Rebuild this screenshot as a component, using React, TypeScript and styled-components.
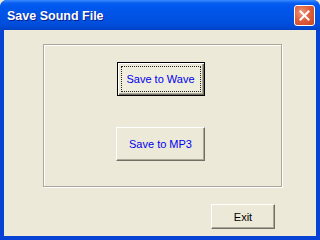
import React from 'react';
import styled, { createGlobalStyle } from 'styled-components';

const Global = createGlobalStyle`
    html, body {
        margin: 0;
        padding: 0;
        background: #ECE9D8;
    }
`;

const Frame = styled.div`
    width: 320px;
    height: 240px;
    box-sizing: border-box;
    display: flex;
    flex-direction: column;
    background: #0842D4;
    border-radius: 7px 7px 0 0;
    overflow: hidden;
    font-family: "Liberation Sans", Arial, sans-serif;
`;

const TitleBar = styled.div`
    height: 30px;
    flex: none;
    display: flex;
    align-items: center;
    padding: 0 5px 0 7px;
    background: linear-gradient(
        to bottom,
        #3A8CFF 0px,
        #0A5FF0 3px,
        #0058EE 6px,
        #0054E6 14px,
        #0050DF 22px,
        #0049D3 27px,
        #0040C4 30px
    );
`;

const Title = styled.span`
    flex: 1;
    color: #fff;
    font-size: 12.5px;
    font-weight: bold;
    text-shadow: 1px 1px 0 #0A1C8C;
    padding-top: 1px;
`;

const CloseButton = styled.div`
    width: 21px;
    height: 21px;
    box-sizing: border-box;
    border: 1px solid #fff;
    border-radius: 3px;
    background: radial-gradient(circle at 35% 35%, #EE9A7E 0%, #E0603E 45%, #C8431F 100%);
    display: flex;
    align-items: center;
    justify-content: center;
`;

const Client = styled.div`
    flex: 1;
    margin: 0 4px 4px 4px;
    background: #ECE9D8;
    display: flex;
    flex-direction: column;
    padding: 14px 0 0 39px;
`;

const GroupBox = styled.div`
    width: 239px;
    height: 143px;
    box-sizing: border-box;
    border: 1px solid #ACA899;
    box-shadow: inset 1px 1px 0 #fff, 1px 1px 0 #fff;
    display: flex;
    flex-direction: column;
    align-items: center;
    padding-top: 17px;
    padding-right: 4px;
    gap: 31px;
`;

const Button = styled.div<{ $w: number; $h: number; $default?: boolean; $blue?: boolean }>`
    width: ${p => p.$w}px;
    height: ${p => p.$h}px;
    box-sizing: border-box;
    background: #ECE9D8;
    border: 1px solid;
    border-color: ${p => (p.$default ? '#000' : '#fff #716F64 #716F64 #fff')};
    box-shadow: ${p =>
        p.$default
            ? 'inset 1px 1px 0 #fff, inset -1px -1px 0 #716F64, inset -2px -2px 0 #ACA899'
            : 'inset -1px -1px 0 #ACA899'};
    display: flex;
    align-items: center;
    justify-content: center;
    padding: 3px;
    color: ${p => (p.$blue ? '#0000F0' : '#000')};
    font-size: 11px;
`;

const Focus = styled.div`
    flex: 1;
    align-self: stretch;
    border: 1px dotted #222;
    background: #EFEDDC;
    display: flex;
    align-items: center;
    justify-content: center;
`;

const ExitRow = styled.div`
    display: flex;
    padding: 17px 0 0 168px;
`;

export default function App() {
    return (
        <>
            <Global />
            <Frame>
                <TitleBar>
                    <Title>Save Sound File</Title>
                    <CloseButton>
                        <svg width="11" height="11" viewBox="0 0 11 11">
                            <path d="M1.5 1.5 L9.5 9.5 M9.5 1.5 L1.5 9.5" stroke="#fff" strokeWidth="2" strokeLinecap="square" />
                        </svg>
                    </CloseButton>
                </TitleBar>
                <Client>
                    <GroupBox>
                        <Button $w={88} $h={34} $default $blue>
                            <Focus>Save to Wave</Focus>
                        </Button>
                        <Button $w={89} $h={34} $blue>Save to MP3</Button>
                    </GroupBox>
                    <ExitRow>
                        <Button $w={64} $h={25}>Exit</Button>
                    </ExitRow>
                </Client>
            </Frame>
        </>
    );
}
